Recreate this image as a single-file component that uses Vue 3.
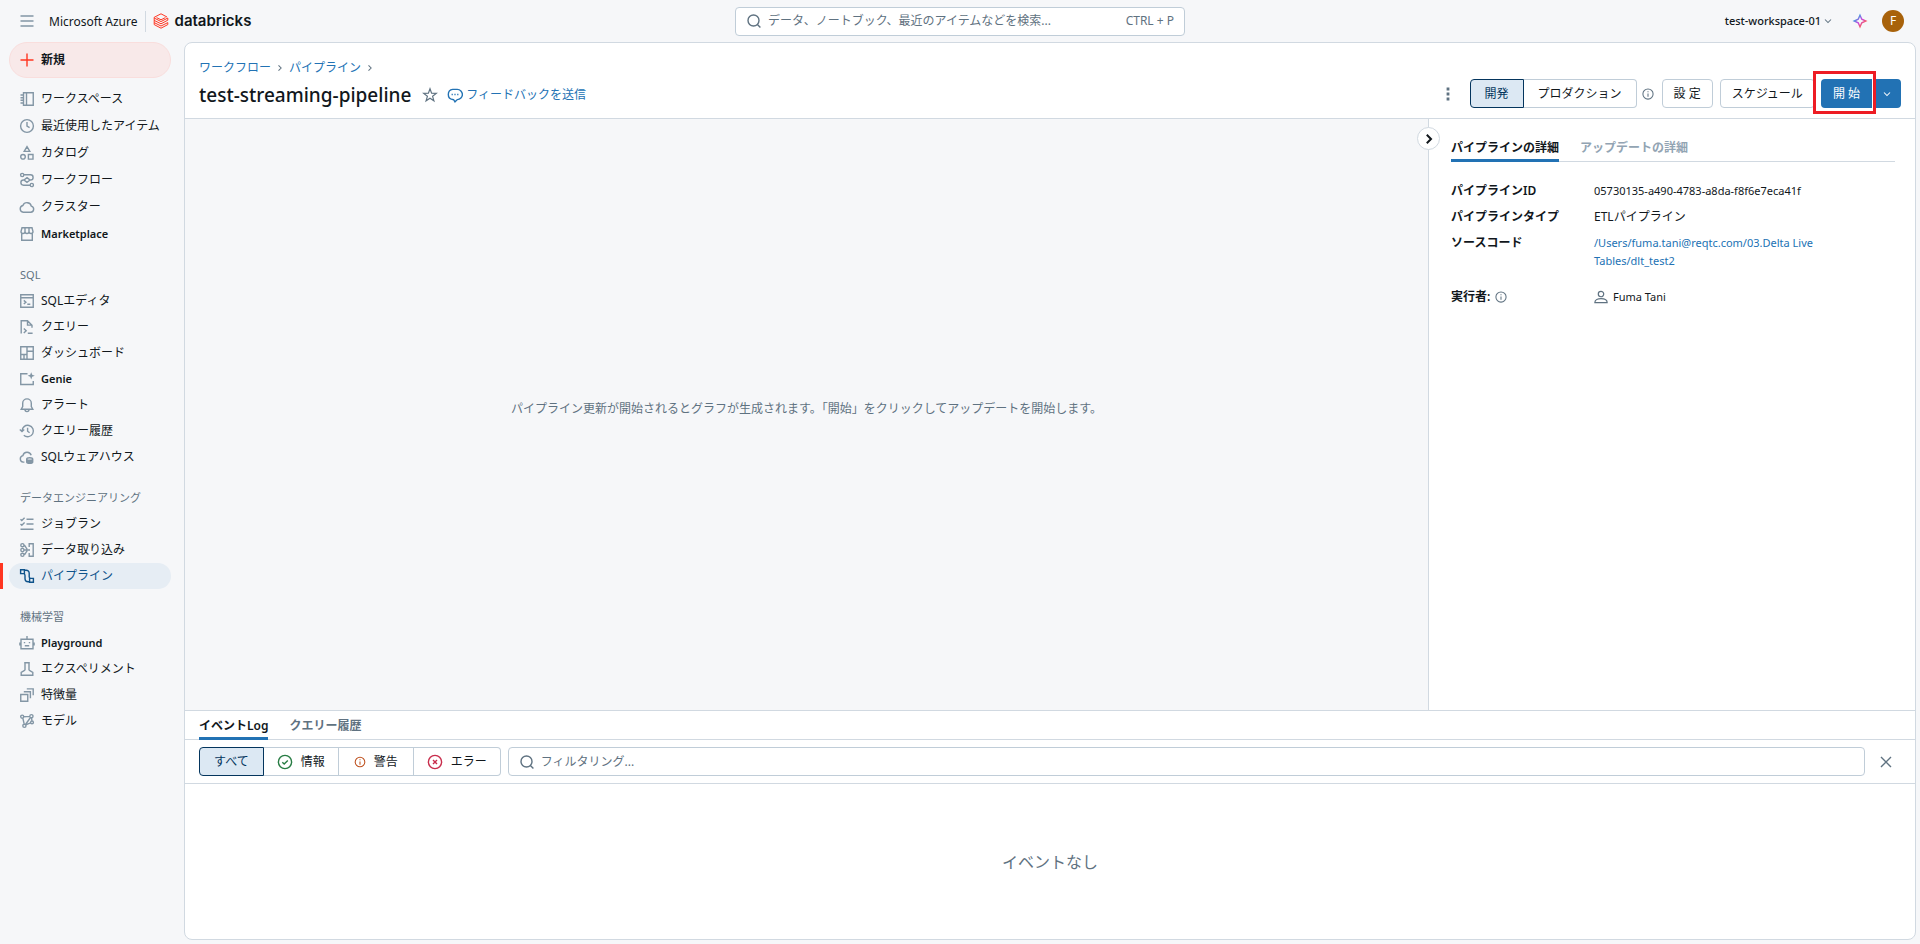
<script setup>
import { ref } from 'vue'

const circle = (x, y, r) => `M${x - r} ${y}a${r} ${r} 0 1 0 ${2 * r} 0a${r} ${r} 0 1 0 ${-2 * r} 0`

const icons = {
  notebook: 'M4.5 1.75h9.75v12.5H4.5zM7.5 1.75v12.5M1.5 4h3M1.5 6.7h3M1.5 9.3h3M1.5 12h3',
  clock: circle(8, 8, 6.4) + 'M8 4v4.2l2.6 1.5',
  catalog: 'M8 1.6l2.8 4.8H5.2z' + circle(4, 11.8, 2.3) + 'M9.4 9.5H14v4.6H9.4z',
  workflows: circle(3.2, 3, 1.6) + circle(12.8, 13, 1.6) + 'M4.8 2.8h6.7a2.6 2.6 0 0 1 0 5.2h-1M11.2 13.2H4.5a2.6 2.6 0 0 1 0-5.2h1M8 5.6L11 8l-3 2.4L5 8z',
  cloud: 'M4.2 13.2h7.6a3.1 3.1 0 0 0 .5-6.1 4.4 4.4 0 0 0-8.4-.6 3.4 3.4 0 0 0 .3 6.7z',
  market: 'M2.7 7.5v6.7h10.6V7.5M3 1.8h10l1 3.7a2 2 0 0 1-4 0 2 2 0 0 1-4 0 2 2 0 0 1-4 0zM6 1.8v3.7M10 1.8v3.7',
  editor: 'M1.75 1.75h12.5v12.5H1.75zM1.75 4.8h12.5M4.8 7.4l2.1 1.8-2.1 1.8M8.3 11.3h3',
  query: 'M2.2 14.5V1.75h6.3L13 6.2v2.5M8.5 1.75v4.4H13M4.8 9.5l2.4 2.2-2.4 2.3M8.8 14.2h4.8',
  dashboard: 'M1.75 1.75h12.5v12.5H1.75zM8 1.75v12.5M1.75 9.5H8M8 6.2h6.25M5 9.5v4.75',
  genie: 'M8.5 2.8H1.75v10.7h12.5V10',
  bell: 'M2.2 12.2h11.6l-1.5-2.7V6.2a4.3 4.3 0 0 0-8.6 0v3.3zM6 12.6a2 2 0 0 0 4 0',
  history: 'M3 8.2a5.7 5.7 0 1 1 1.8 4M.8 6.5L3 8.6l2.2-2.1M8.6 4.8v3.4l2 1.5',
  warehouse: 'M5.4 13.1H4.2a3.3 3.3 0 0 1-.3-6.5 4.3 4.3 0 0 1 8.3-.3M7.7 10a3 1.3 0 1 0 6 0a3 1.3 0 1 0-6 0v3a3 1.3 0 0 0 6 0v-3M7.7 11.5a3 1.3 0 0 0 6 0',
  jobs: 'M7.5 3.2h7M7.5 8h7M1.5 13.2h13M1.5 3.2l1.3 1.3 2.8-2.7M1.5 8l1.3 1.3 2.8-2.7',
  ingest: circle(3.4, 3.2, 1.6) + circle(3.4, 8, 1.6) + circle(3.4, 12.8, 1.6) + 'M5 3.2c2 .3 1.6 3.2 3.4 4M5 12.8c2-.3 1.6-3.2 3.4-4M5 8h6M10.2 5V1.8h4v12.4h-4V11',
  pipeline: 'M1.6 1.8h3.8v3.8H1.6zM10.6 10.4h3.8v3.8h-3.8zM5.4 2.2h1.8a3 3 0 0 1 3 3v3.6a2 2 0 0 0 1.4 1.6M4.8 5.6c1 .3 1.2 1 1.2 2v3a3.2 3.2 0 0 0 3.2 3.2h1.4',
  robot: 'M2 4.2h12v9.6H2zM8 4.2V1M4.8 7.6h1.4M9.8 7.6h1.4M5.8 10.8h4.4M.9 7.5v3M15.1 7.5v3',
  beaker: 'M5.2 1.8h5.6M6 1.8v7.4M10 1.8v7.4M6 9.2l-3.8 2.2v2.8h11.6v-2.8L10 9.2',
  features: 'M1.75 7.5h7v6.75h-7zM4.8 4.8h6.6v6.4M7.8 1.9h6.4v6.4',
  models: circle(3.2, 3.6, 1.5) + circle(12.4, 3.2, 1.6) + circle(13, 9.4, 1.4) + circle(5.4, 12.8, 1.6) + 'M4.7 3.8l6.1-.4M3.8 5l1.4 6.2M11.5 4.5l-5 7M6.6 11.8l5-2M12.6 4.8l.3 3.2'
}

const groups = [
  {
    title: '',
    items: [
      ['notebook', 'ワークスペース'], ['clock', '最近使用したアイテム'], ['catalog', 'カタログ'],
      ['workflows', 'ワークフロー'], ['cloud', 'クラスター'], ['market', 'Marketplace']
    ]
  },
  {
    title: 'SQL',
    items: [
      ['editor', 'SQLエディタ'], ['query', 'クエリー'], ['dashboard', 'ダッシュボード'], ['genie', 'Genie'],
      ['bell', 'アラート'], ['history', 'クエリー履歴'], ['warehouse', 'SQLウェアハウス']
    ]
  },
  {
    title: 'データエンジニアリング',
    items: [['jobs', 'ジョブラン'], ['ingest', 'データ取り込み'], ['pipeline', 'パイプライン']]
  },
  {
    title: '機械学習',
    items: [['robot', 'Playground'], ['beaker', 'エクスペリメント'], ['features', '特徴量'], ['models', 'モデル']]
  }
]
const activeItem = 'pipeline'
const isLatin = (name) => /^[A-Za-z]+$/.test(name)

const mode = ref('dev')
const level = ref('all')
const query = ref('')
const filter = ref('')
</script>

<template>
  <div class="app">
    <header class="topbar">
      <div class="brand">
        <button class="plain" aria-label="メニュー">
          <svg class="i16 muted" viewBox="0 0 16 16"><path d="M1.5 3h13M1.5 8h13M1.5 13h13" /></svg>
        </button>
        <span class="azure">Microsoft Azure</span>
        <a href="#" class="logo">
          <svg class="mark" viewBox="0 0 16 16">
            <path d="M1.2 5V4.3L8 .8l6 3.2M1.2 5L8 8.6 14.8 5v2.2L8 10.8 1.2 7.4v2.2L8 13l6.8-3.4v2L8 15.2l-6.8-3.6V9.6M1.2 7.4V5M3.6 4.6L8 6.8l4.4-2.2" />
          </svg>
          <span>databricks</span>
        </a>
      </div>
      <label class="search">
        <svg class="i16 grey" viewBox="0 0 16 16"><path d="M2 7.5a5.5 5.5 0 1 0 11 0a5.5 5.5 0 1 0-11 0M11.4 11.4l3 3" /></svg>
        <input v-model="query" type="text" aria-label="検索" placeholder="データ、ノートブック、最近のアイテムなどを検索..." />
        <span class="shortcut">CTRL + P</span>
      </label>
      <div class="account">
        <button class="plain workspace">
          test-workspace-01
          <svg class="i12 grey" viewBox="0 0 16 16"><path d="M4 6l4 4 4-4" /></svg>
        </button>
        <button class="plain" aria-label="アシスタント">
          <svg class="i16" viewBox="0 0 16 16">
            <defs>
              <linearGradient id="spark" x1="0" y1="0" x2="1" y2="1">
                <stop offset="0.2" stop-color="#4299e0" />
                <stop offset="0.5" stop-color="#ca42e0" />
                <stop offset="0.85" stop-color="#ff5f46" />
              </linearGradient>
            </defs>
            <path d="M8 2.2l1.8 4L13.8 8l-4 1.8-1.8 4-1.8-4-4-1.8 4-1.8z" stroke="url(#spark)" />
          </svg>
        </button>
        <button class="avatar">F</button>
      </div>
    </header>

    <div class="body">
      <nav class="sidebar">
        <button class="new">
          <svg class="i16 red" viewBox="0 0 16 16"><path d="M8 1.5v13M1.5 8h13" /></svg>
          新規
        </button>
        <section v-for="g in groups" :key="g.title" class="group">
          <h2 v-if="g.title">{{ g.title }}</h2>
          <ul>
            <li v-for="[icon, name] in g.items" :key="name" :class="{ active: icon === activeItem }">
              <a href="#" :class="{ latin: isLatin(name) }">
                <svg class="i16" viewBox="0 0 16 16">
                  <path :d="icons[icon]" />
                  <path v-if="icon === 'genie'" class="solid" d="M12.2 1.2l1 2.6 2.6 1-2.6 1-1 2.6-1-2.6-2.6-1 2.6-1z" />
                </svg>
                {{ name }}
              </a>
            </li>
          </ul>
        </section>
      </nav>

      <main class="card">
        <div class="head">
          <div class="heading">
            <div class="crumbs">
              <a href="#">ワークフロー</a>
              <svg class="i12 grey" viewBox="0 0 16 16"><path d="M6 4.5L9.5 8 6 11.5" /></svg>
              <a href="#">パイプライン</a>
              <svg class="i12 grey" viewBox="0 0 16 16"><path d="M6 4.5L9.5 8 6 11.5" /></svg>
            </div>
            <div class="title">
              <h1>test-streaming-pipeline</h1>
              <button class="plain" aria-label="お気に入り">
                <svg class="i16 grey thin" viewBox="0 0 16 16"><path d="M8 1.8l1.6 4.4 4.7.2-3.7 2.9 1.3 4.5L8 11.2l-3.9 2.6 1.3-4.5-3.7-2.9 4.7-.2z" /></svg>
              </button>
              <a href="#" class="feedback">
                <svg class="i16" viewBox="0 0 16 16"><path d="M6.6 12.6a5 5 0 0 1-.9-.1A5.1 5.1 0 0 1 5.7 2.4h4.6a5.1 5.1 0 0 1 0 10.2L8 14.8zM4.6 7.5h1.2M7.4 7.5h1.2M10.2 7.5h1.2" /></svg>
                フィードバックを送信
              </a>
            </div>
          </div>
          <div class="actions">
            <button class="plain kebab" aria-label="その他">
              <svg class="i16 grey" viewBox="0 0 16 16"><path class="solid" d="M6.6 1.6h2.8v2.8H6.6zM6.6 6.6h2.8v2.8H6.6zM6.6 11.6h2.8v2.8H6.6z" /></svg>
            </button>
            <div class="segment" role="radiogroup" aria-label="モード">
              <label><input v-model="mode" type="radio" name="mode" value="dev" /><span>開発</span></label>
              <label><input v-model="mode" type="radio" name="mode" value="prod" /><span>プロダクション</span></label>
            </div>
            <svg class="i12 grey info" viewBox="0 0 16 16"><path :d="circle(8, 8, 6.8)" /><path d="M8 7.2v4.3M8 4.3v1.5" /></svg>
            <button class="btn">設 定</button>
            <button class="btn">スケジュール</button>
            <div class="start">
              <button class="primary">開 始</button>
              <button class="primary more" aria-label="開始オプション">
                <svg class="i12" viewBox="0 0 16 16"><path d="M4 6l4 4 4-4" /></svg>
              </button>
            </div>
          </div>
        </div>

        <div class="work">
          <div class="graph">パイプライン更新が開始されるとグラフが生成されます。「開始」をクリックしてアップデートを開始します。</div>
          <aside class="details">
            <button class="collapse" aria-label="詳細を閉じる">
              <svg class="i16" viewBox="0 0 16 16"><path d="M5.8 3.8L10 8l-4.2 4.2" /></svg>
            </button>
            <div class="tabs" role="tablist">
              <button role="tab" aria-selected="true" class="tab on">パイプラインの詳細</button>
              <button role="tab" aria-selected="false" class="tab off">アップデートの詳細</button>
            </div>
            <dl>
              <dt>パイプラインID</dt><dd class="latin">05730135-a490-4783-a8da-f8f6e7eca41f</dd>
              <dt>パイプラインタイプ</dt><dd>ETLパイプライン</dd>
              <dt>ソースコード</dt><dd class="source latin"><a href="#">/Users/fuma.tani@reqtc.com/03.Delta Live Tables/dlt_test2</a></dd>
              <dt>
                実行者:
                <svg class="i12 grey" viewBox="0 0 16 16"><path :d="circle(8, 8, 6.8)" /><path d="M8 7.2v4.3M8 4.3v1.5" /></svg>
              </dt>
              <dd class="latin">
                <svg class="i14 grey" viewBox="0 0 16 16"><path d="M4.9 4.6a3.1 3.1 0 1 0 6.2 0a3.1 3.1 0 1 0-6.2 0M1 14.4c0-6 14-6 14 0z" /></svg>
                Fuma Tani
              </dd>
            </dl>
          </aside>
        </div>

        <section class="events">
          <div class="tabs" role="tablist">
            <button role="tab" aria-selected="true" class="tab on">イベントLog</button>
            <button role="tab" aria-selected="false" class="tab">クエリー履歴</button>
          </div>
          <div class="filters">
            <div class="segment levels" role="radiogroup" aria-label="レベル">
              <label><input v-model="level" type="radio" name="level" value="all" /><span>すべて</span></label>
              <label><input v-model="level" type="radio" name="level" value="info" /><span>
                <svg class="i16 green" viewBox="0 0 16 16"><path :d="circle(8, 8, 6.6)" /><path d="M5.3 8.2l1.9 1.8L10.8 6.4" /></svg>情報</span></label>
              <label><input v-model="level" type="radio" name="level" value="warn" /><span>
                <svg class="i12 orange" viewBox="0 0 16 16"><path :d="circle(8, 8, 6.4)" /><path d="M8 7.2v4.3M8 4.3v1.5" /></svg>警告</span></label>
              <label><input v-model="level" type="radio" name="level" value="error" /><span>
                <svg class="i16 crimson" viewBox="0 0 16 16"><path :d="circle(8, 8, 6.6)" /><path d="M6 6l4 4M10 6l-4 4" /></svg>エラー</span></label>
            </div>
            <label class="filterbox">
              <svg class="i16 grey" viewBox="0 0 16 16"><path d="M2 7.5a5.5 5.5 0 1 0 11 0a5.5 5.5 0 1 0-11 0M11.4 11.4l3 3" /></svg>
              <input v-model="filter" type="text" aria-label="フィルタリング" placeholder="フィルタリング..." />
            </label>
            <button class="plain close" aria-label="閉じる">
              <svg class="i16 grey" viewBox="0 0 16 16"><path d="M3 3l10 10M13 3L3 13" /></svg>
            </button>
          </div>
          <div class="empty">イベントなし</div>
        </section>
      </main>
    </div>
  </div>
</template>

<style>
body {
  background: #f6f7f9;
}
</style>

<style scoped>
.app {
  min-height: 100vh;
  display: flex;
  flex-direction: column;
  background: #f6f7f9;
  color: #11171c;
  font: 12px/18px "Noto Sans", "Noto Sans CJK JP", sans-serif;
}
* {
  box-sizing: border-box;
}
button,
input {
  font: inherit;
  color: inherit;
}
button {
  cursor: pointer;
  white-space: nowrap;
}
a {
  color: #2272b4;
  text-decoration: none;
}
h1,
h2,
ul,
dl,
dd {
  margin: 0;
  padding: 0;
}
svg {
  flex: none;
  display: block;
  fill: none;
  stroke: currentColor;
  stroke-width: 1.4;
}
.solid {
  fill: currentColor;
  stroke: none;
}
.i12 {
  width: 12px;
  height: 12px;
}
.i14 {
  width: 14px;
  height: 14px;
}
.i16 {
  width: 16px;
  height: 16px;
}
.thin {
  stroke-width: 1.2;
}
.muted {
  color: #8396a5;
}
.grey {
  color: #5f7281;
}
.red {
  color: #ff3621;
}
.green {
  color: #277c43;
}
.orange {
  color: #be501e;
}
.crimson {
  color: #c82d4c;
}
.latin {
  font-size: 11px;
}
.plain {
  display: flex;
  align-items: center;
  padding: 0;
  border: 0;
  background: none;
}

.topbar {
  display: grid;
  grid-template-columns: 1fr 450px 1fr;
  align-items: center;
  height: 42px;
  padding: 0 16px;
}
.brand {
  display: flex;
  align-items: center;
  padding-left: 3px;
}
.azure {
  margin-left: 14px;
  padding-right: 7px;
  border-right: 1px solid #d1d9e1;
  line-height: 21px;
}
.logo {
  display: flex;
  align-items: center;
  gap: 6px;
  margin-left: 7px;
  color: #11171c;
  font: 600 15px/20px Inter, sans-serif;
}
.mark {
  width: 16px;
  height: 16px;
  color: #ff3621;
  stroke-width: 1;
}
.search,
.filterbox {
  display: flex;
  align-items: center;
  gap: 6px;
  height: 29px;
  padding: 0 10px;
  border: 1px solid #c0cdd8;
  border-radius: 4px;
  background: #fff;
  color: #5f7281;
}
.search input,
.filterbox input {
  flex: 1;
  min-width: 0;
  padding: 0;
  border: 0;
  outline: 0;
  background: none;
}
.search input::placeholder,
.filterbox input::placeholder {
  color: #5f7281;
  opacity: 1;
}
.account {
  display: flex;
  align-items: center;
  justify-content: flex-end;
}
.workspace {
  gap: 1px;
  margin-right: 18px;
  font-size: 11px;
  font-weight: 500;
}
.avatar {
  width: 22px;
  height: 22px;
  margin-left: 14px;
  padding: 0;
  border: 0;
  border-radius: 50%;
  background: #a8620b;
  color: #fff;
}

.body {
  flex: 1;
  display: flex;
}
.sidebar {
  flex: none;
  width: 184px;
  padding-right: 13px;
}
.new {
  display: flex;
  align-items: center;
  gap: 6px;
  width: 162px;
  height: 36px;
  margin: 0 0 8px 9px;
  padding: 0 9px;
  border: 1px solid #f9dedd;
  border-radius: 18px;
  background: #f8e9e9;
  font-weight: 600;
}
.group + .group {
  margin-top: 15px;
}
.group h2 {
  padding-left: 20px;
  color: #5f7281;
  font-size: 11px;
  font-weight: 400;
  line-height: 26px;
}
.group:first-of-type ul {
  display: grid;
  gap: 1px;
}
.group li {
  display: block;
  height: 26px;
  padding-left: 9px;
}
.group a {
  display: flex;
  align-items: center;
  gap: 6px;
  height: 26px;
  padding-left: 10px;
  border-radius: 13px;
  color: #11171c;
}
.group .latin {
  font-weight: 600;
}
.group svg {
  color: #8396a5;
}
.group .active {
  padding-left: 6px;
  border-left: 3px solid #ff3621;
}
.group .active a {
  background: #e6edf4;
  color: #0e538b;
}
.group .active svg {
  color: #0e538b;
}

.card {
  flex: 1;
  min-width: 0;
  display: flex;
  flex-direction: column;
  margin: 0 4px 4px 0;
  border: 1px solid #d1d9e1;
  border-radius: 8px;
  background: #fff;
}
.head {
  display: flex;
  justify-content: space-between;
  align-items: flex-end;
  padding: 16px 14px 9px;
  border-bottom: 1px solid #d1d9e1;
}
.crumbs {
  display: flex;
  align-items: center;
  gap: 3px;
}
.title {
  display: flex;
  align-items: center;
  height: 32px;
  padding-top: 4px;
}
h1 {
  margin-right: 11px;
  font: 500 19px/28px "Noto Sans", sans-serif;
}
.feedback {
  display: flex;
  align-items: center;
  gap: 3px;
  margin-left: 9px;
}
.actions {
  display: flex;
  align-items: center;
  padding-bottom: 1px;
}
.kebab {
  margin-right: 14px;
}
.segment {
  display: flex;
}
.segment label {
  position: relative;
  display: flex;
}
.segment input {
  position: absolute;
  opacity: 0;
  margin: 0;
}
.segment span {
  display: flex;
  align-items: center;
  height: 29px;
  padding: 0 14px;
  border: 1px solid #c0cdd8;
  border-left-width: 0;
}
.segment label:first-child span {
  border-left-width: 1px;
  border-radius: 4px 0 0 4px;
}
.segment label:last-child span {
  border-radius: 0 4px 4px 0;
}
.segment input:checked + span {
  border-color: #04355d;
  background: #dce8f3;
  color: #04355d;
}
.info {
  margin: 0 8px 0 5px;
}
.btn {
  height: 29px;
  padding: 0 11px;
  border: 1px solid #c0cdd8;
  border-radius: 4px;
  background: #fff;
}
.btn + .btn {
  margin-left: 7px;
}
.start {
  position: relative;
  display: flex;
  gap: 1px;
  margin-left: 6px;
}
.start::before {
  content: "";
  position: absolute;
  top: -8px;
  left: -8px;
  width: 57px;
  height: 37px;
  border: 3px solid #ed1c24;
  pointer-events: none;
}
.primary {
  height: 29px;
  padding: 0 12px;
  border: 0;
  border-radius: 4px 0 0 4px;
  background: #2272b4;
  color: #fff;
}
.more {
  padding: 0 8px;
  border-radius: 0 4px 4px 0;
}

.work {
  flex: 1;
  display: flex;
}
.graph {
  flex: 1;
  display: flex;
  align-items: center;
  justify-content: center;
  padding-bottom: 12px;
  background: #f6f7f9;
  color: #5f7281;
}
.details {
  position: relative;
  width: 487px;
  padding: 16px 20px 16px 22px;
  border-left: 1px solid #d1d9e1;
}
.collapse {
  position: absolute;
  top: 8px;
  left: -12px;
  display: flex;
  align-items: center;
  justify-content: center;
  width: 23px;
  height: 23px;
  padding: 0;
  border: 1px solid #d1d9e1;
  border-radius: 50%;
  background: #fff;
}
.collapse svg {
  stroke-width: 2;
}
.tabs {
  display: flex;
  gap: 21px;
  border-bottom: 1px solid #d1d9e1;
}
.tab {
  margin-bottom: -1px;
  padding: 4px 0 2px;
  border: 0;
  border-bottom: 3px solid transparent;
  background: none;
  color: #5f7281;
  font-weight: 600;
}
.tab.on {
  border-color: #2272b4;
  color: #11171c;
}
.tab.off {
  color: #92a4b3;
}
dl {
  display: grid;
  grid-template-columns: 143px 1fr;
  row-gap: 8px;
  padding: 20px 70px 0 0;
}
dt {
  font-weight: 600;
}
dt,
dl dd {
  display: flex;
  align-items: center;
  align-self: start;
  gap: 5px;
}
dl .source {
  padding-bottom: 10px;
}

.events {
  border-top: 1px solid #d1d9e1;
}
.events .tabs {
  padding-left: 14px;
  padding-top: 2px;
}
.filters {
  display: flex;
  align-items: center;
  gap: 7px;
  padding: 7px 21px 7px 14px;
  border-bottom: 1px solid #d1d9e1;
}
.levels span {
  gap: 8px;
  padding: 0 13px;
}
.levels label:nth-child(3) span {
  padding: 0 15px;
}
.levels label:first-child span {
  padding: 0 14px;
}
.filterbox {
  flex: 1;
}
.close {
  margin-left: 6px;
}
.empty {
  display: flex;
  align-items: center;
  justify-content: center;
  min-height: 155px;
  color: #5f7281;
  font-size: 16px;
}
</style>
